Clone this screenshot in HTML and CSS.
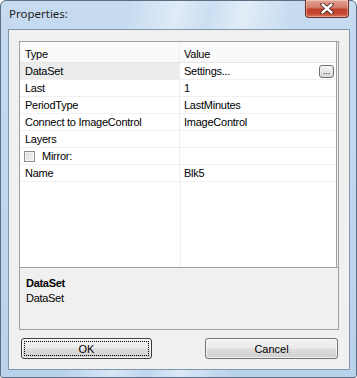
FILE: index.html
```html
<!DOCTYPE html>
<html>
<head>
<meta charset="utf-8">
<link rel="stylesheet" href="styles.css">
</head>
<body>
<div class="window">
  <div class="titlebar">
    <div class="title">Properties:</div>
    <div class="close">
      <svg width="14" height="11" viewBox="0 0 14 11">
        <path d="M2.5 1.5 L11.5 9.5 M11.5 1.5 L2.5 9.5" stroke="#4a1f18" stroke-width="4.2" stroke-linecap="round"/>
        <path d="M2.5 1.5 L11.5 9.5 M11.5 1.5 L2.5 9.5" stroke="#ffffff" stroke-width="2.4" stroke-linecap="round"/>
      </svg>
    </div>
  </div>
  <div class="client">
    <div class="grid">
      <div class="view">
        <div class="row header"><div class="cell name">Type</div><div class="cell value">Value</div></div>
        <div class="row"><div class="cell name selected">DataSet</div><div class="cell value">Settings...<span class="dots">...</span></div></div>
        <div class="row"><div class="cell name">Last</div><div class="cell value">1</div></div>
        <div class="row"><div class="cell name">PeriodType</div><div class="cell value">LastMinutes</div></div>
        <div class="row"><div class="cell name">Connect to ImageControl</div><div class="cell value">ImageControl</div></div>
        <div class="row"><div class="cell name">Layers</div><div class="cell value"></div></div>
        <div class="row"><div class="cell name"><span class="check"></span>Mirror:</div><div class="cell value"></div></div>
        <div class="row"><div class="cell name">Name</div><div class="cell value">Blk5</div></div>
        <div class="filler"></div>
      </div>
    </div>
    <div class="desc">
      <div class="desc-title">DataSet</div>
      <div class="desc-text">DataSet</div>
    </div>
    <div class="buttons">
      <div class="btn default"><span class="focus">OK</span></div>
      <div class="btn">Cancel</div>
    </div>
  </div>
</div>
</body>
</html>
```
FILE: styles.css
```css
html, body {
  margin: 0;
  padding: 0;
  background: #ffffff;
}
body {
  font-family: "Liberation Sans", Arial, sans-serif;
  font-size: 11px;
  color: #000;
}
.window {
  width: 357px;
  height: 378px;
  box-sizing: border-box;
  border: 1px solid #5a6f86;
  border-radius: 6px 6px 3px 3px;
  background:
    linear-gradient(100deg, rgba(255,255,255,0) 30%, rgba(255,255,255,0.45) 42%, rgba(255,255,255,0.1) 50%, rgba(255,255,255,0.5) 58%, rgba(255,255,255,0) 70%),
    linear-gradient(to bottom, #c6dbf0 0%, #b9d2ec 100%);
  display: flex;
  flex-direction: column;
}
.titlebar {
  height: 28px;
  display: flex;
  justify-content: space-between;
  align-items: flex-start;
}
.title {
  font-family: "Noto Sans", "Liberation Sans", sans-serif;
  font-size: 11.5px;
  padding: 5px 0 0 8px;
  color: #1e1e1e;
}
.close {
  width: 44px;
  height: 18px;
  margin-right: 7px;
  margin-top: -1px;
  box-sizing: border-box;
  border: 1px solid #6f2b22;
  border-top: none;
  border-radius: 0 0 4px 4px;
  background: linear-gradient(to bottom, #e5a495 0%, #d47a68 45%, #c0402c 55%, #c54a32 80%, #d8765c 100%);
  display: flex;
  align-items: center;
  justify-content: center;
  box-shadow: inset 0 0 0 1px rgba(255,255,255,0.35);
}
.client {
  margin: 0 6px 7px 7px;
  flex: 1;
  border: 1px solid #8397ad;
  background: #f0f0f0;
  padding: 11px 10px 10px 10px;
  display: flex;
  flex-direction: column;
}
.grid {
  height: 227px;
  box-sizing: border-box;
  border: 1px solid #a0a0a0;
  background: #f0f0f0;
  display: flex;
}
.view {
  flex: 1;
  margin-right: 1px;
  background: #fff;
  border-right: 1px solid #a0a0a0;
  display: flex;
  flex-direction: column;
}
.row {
  display: flex;
  height: 17px;
  box-sizing: border-box;
  border-bottom: 1px solid #f0f0f0;
}
.row.header {
  height: 21px;
  background: #fafafa;
  border-bottom: 1px solid #e4e4e4;
}
.row.header .cell {
  align-items: flex-end;
  padding-bottom: 2px;
}
.cell {
  display: flex;
  align-items: center;
  box-sizing: border-box;
  letter-spacing: -0.25px;
  white-space: nowrap;
}
.cell.name {
  width: 160px;
  padding-left: 5px;
  border-right: 1px solid #f0f0f0;
}
.cell.name.selected {
  background: #ececec;
}
.cell.value {
  flex: 1;
  padding-left: 4px;
  padding-right: 2px;
}
.dots {
  margin-left: auto;
  width: 15px;
  height: 13px;
  box-sizing: border-box;
  border: 1px solid #707070;
  border-radius: 3px;
  background: linear-gradient(to bottom, #f6f6f6 0%, #e6e6e6 50%, #d6d6d6 100%);
  font-size: 9px;
  line-height: 13px;
  text-align: center;
  letter-spacing: 0;
  display: flex;
  align-items: flex-end;
  justify-content: center;
  line-height: 1;
  padding-bottom: 1px;
}
.check {
  width: 11px;
  height: 11px;
  box-sizing: border-box;
  border: 1px solid #8e8f8f;
  background: linear-gradient(135deg, #dcdcdc 0%, #f6f6f6 100%);
  box-shadow: inset 0 0 0 1px #f4f4f4;
  margin-left: -1px;
  margin-right: 7px;
}
.filler {
  flex: 1;
  display: flex;
}
.filler::before {
  content: "";
  width: 160px;
  border-right: 1px solid #f0f0f0;
}
.desc {
  height: 62px;
  box-sizing: border-box;
  border: 1px solid #a0a0a0;
  border-top: none;
  background: #f0f0f0;
  padding: 8px 0 0 6px;
}
.desc-title {
  font-weight: bold;
  letter-spacing: -0.3px;
  line-height: 15px;
}
.desc-text {
  letter-spacing: -0.3px;
  line-height: 15px;
}
.buttons {
  margin-top: 8px;
  display: flex;
  justify-content: space-between;
  padding: 0 1px 0 2px;
}
.btn {
  height: 21px;
  box-sizing: border-box;
  border: 1px solid #707070;
  border-radius: 3px;
  background: linear-gradient(to bottom, #f2f2f2 0%, #ebebeb 48%, #dddddd 52%, #cfcfcf 100%);
  box-shadow: inset 0 0 0 1px rgba(255,255,255,0.7);
  display: flex;
  align-items: center;
  justify-content: center;
  width: 133px;
}
.btn.default {
  width: 131px;
  border-color: #3c3c3c;
  padding: 2px;
}
.focus {
  flex: 1;
  align-self: stretch;
  border: 1px dotted #000;
  display: flex;
  align-items: center;
  justify-content: center;
}
```
